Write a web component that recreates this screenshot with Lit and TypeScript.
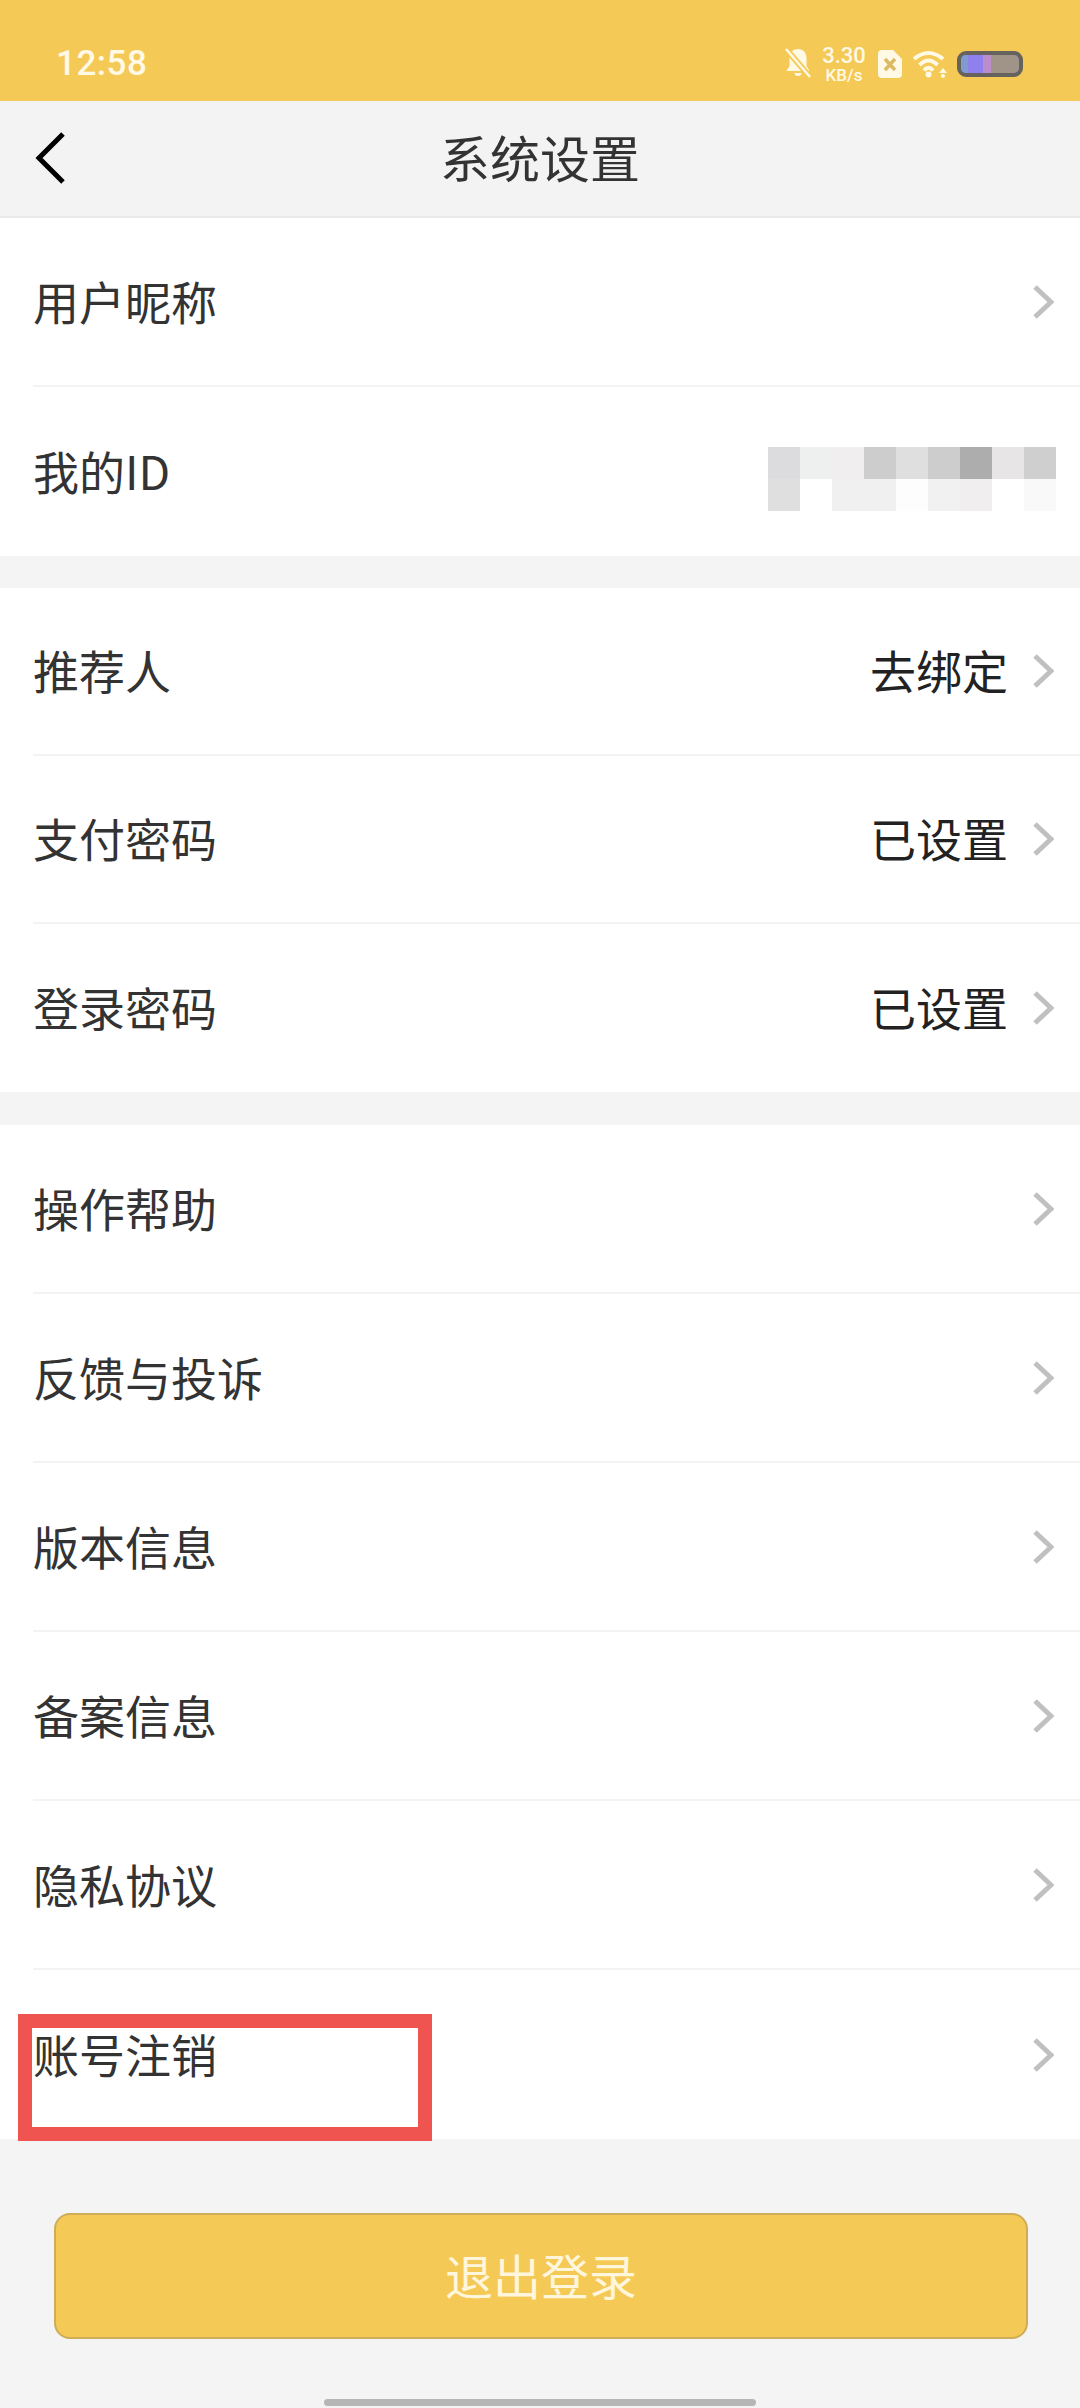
import { LitElement, css, html, svg } from "lit";
import { customElement } from "lit/decorators.js";

// settings screen: rows are grouped in three white sections on a grey page

interface Row {
  label: string;
  value?: string;
  blurred?: boolean;
  noChevron?: boolean;
}

const SECTIONS: { cls: string; rows: Row[] }[] = [
  {
    cls: "first",
    rows: [{ label: "用户昵称" }, { label: "我的ID", blurred: true, noChevron: true }],
  },
  {
    cls: "second",
    rows: [
      { label: "推荐人", value: "去绑定" },
      { label: "支付密码", value: "已设置" },
      { label: "登录密码", value: "已设置" },
    ],
  },
  {
    cls: "third",
    rows: [
      { label: "操作帮助" },
      { label: "反馈与投诉" },
      { label: "版本信息" },
      { label: "备案信息" },
      { label: "隐私协议" },
      { label: "账号注销" },
    ],
  },
];

// mosaic that hides the user id, two rows of nine cells
const MOSAIC = [
  "#dcdbdd", "#eef0ef", "#f1eef0", "#cdcdcd", "#dfdfdf", "#cdcdcd", "#adadad", "#e8e5e7", "#cfcfcf",
  "#dfdfdf", "#ffffff", "#eff0ef", "#eff0ef", "#fefdfd", "#f0f1f0", "#f1eef0", "#ffffff", "#f9f9f9",
];

const chevron = svg`<path d="M3 3 L19 18 L3 33" fill="none" stroke="#c0c0c0" stroke-width="5" />`;

@customElement("app-root")
export class AppRoot extends LitElement {
  static styles = css`
    :host {
      display: block;
      width: 1080px;
      height: 2408px;
      overflow: hidden;
      font-family: "Noto Sans CJK SC", "Noto Sans", sans-serif;
    }
    .page {
      position: relative;
      display: flex;
      flex-direction: column;
      height: 2408px;
      background: #f4f4f5;
    }
    .status {
      display: flex;
      align-items: flex-start;
      justify-content: space-between;
      height: 101px;
      padding: 0 57px 0 56px;
      box-sizing: border-box;
      background: #f5c956;
      color: #fff9e6;
    }
    .time {
      margin-top: 41px;
      font: 500 35px/46px Roboto, sans-serif;
      letter-spacing: 0.5px;
    }
    .icons {
      display: flex;
      align-items: flex-start;
      margin-top: 46px;
    }
    .icons svg {
      display: block;
    }
    .speed {
      display: flex;
      flex-direction: column;
      align-items: center;
      width: 44px;
      margin: 0 12px 0 10px;
      font-family: Roboto, sans-serif;
      font-weight: 500;
    }
    .speed b {
      font-size: 22px;
      font-weight: 500;
      line-height: 20px;
    }
    .speed i {
      font-size: 17px;
      line-height: 18px;
      font-style: normal;
    }
    .wifi {
      margin-left: 10px;
    }
    .battery {
      display: flex;
      width: 66px;
      height: 26px;
      margin: 5px 0 0 10px;
      box-sizing: border-box;
      border: 4px solid #66635f;
      border-radius: 9px;
      overflow: hidden;
      background: #a09488;
    }
    .battery span {
      display: block;
      height: 100%;
    }
    .seg-a {
      width: 7px;
      background: #7f9bd0;
    }
    .seg-b {
      width: 15px;
      background: #8f80ee;
    }
    .seg-c {
      width: 8px;
      background: #bd8ccb;
    }
    .header {
      position: relative;
      display: flex;
      align-items: center;
      justify-content: center;
      height: 117px;
      padding-bottom: 5px;
      box-sizing: border-box;
      border-bottom: 2px solid #e9e9e9;
      background: #f3f3f3;
      color: #333;
      font-size: 50px;
      line-height: 1;
    }
    .back {
      position: absolute;
      left: 34px;
      top: 31px;
    }
    .section {
      background: #fff;
    }
    .second {
      margin-top: 32px;
    }
    .third {
      margin-top: 33px;
    }
    .row {
      display: flex;
      align-items: center;
      justify-content: space-between;
      height: 169px;
      margin-left: 33px;
      padding-right: 26px;
      padding-bottom: 4px;
      box-sizing: border-box;
      border-bottom: 2px solid #f3f3f3;
      color: #333;
      font-size: 46px;
      line-height: 1;
    }
    .second .row {
      height: 168px;
    }
    .row:last-child {
      border-bottom: none;
    }
    .end {
      display: flex;
      align-items: center;
      gap: 24px;
      color: #222;
    }
    .end svg {
      display: block;
      margin-top: 4px;
    }
    .mosaic {
      display: grid;
      grid-template-columns: repeat(9, 32px);
      grid-auto-rows: 32px;
      margin: 18px -2px 0 0;
    }
    .logout {
      display: flex;
      align-items: center;
      justify-content: center;
      height: 126px;
      margin: 74px 52px 0 54px;
      padding-bottom: 5px;
      box-sizing: border-box;
      border: 2px solid #cfad57;
      border-radius: 16px;
      background: #f5c956;
      color: #fff6dc;
      font-size: 48px;
      line-height: 1;
    }
    .home {
      width: 432px;
      height: 7px;
      margin: 60px auto 0 324px;
      border-radius: 4px;
      background: #b6b6b6;
    }
    /* annotation drawn over the last row */
    .mark {
      position: absolute;
      left: 18px;
      top: 2014px;
      width: 414px;
      height: 127px;
      box-sizing: border-box;
      border: 14px solid #f05450;
    }
  `;

  private renderStatusIcons() {
    return html`
      <div class="icons">
        <svg width="28" height="32" viewBox="0 0 28 32">
          <path
            d="M14 3c5.500 0 8.500 4 8.500 9v8l3 5H2.500l3-5v-8c0-5 3-9 8.500-9z M10.500 27h7a3.500 3 0 0 1-7 0z"
            fill="#fff9e6"
          />
          <path d="M2 3 L26 31" stroke="#f5c956" stroke-width="6" />
          <path d="M2 3 L26 31" stroke="#fff9e6" stroke-width="2.500" />
        </svg>
        <div class="speed"><b>3.30</b><i>KB/s</i></div>
        <svg width="24" height="32" viewBox="0 0 24 32">
          <path d="M4 4h11l9 9v15a4 4 0 0 1-4 4H4a4 4 0 0 1-4-4V8a4 4 0 0 1 4-4z" fill="#fff9e6" />
          <path d="M7 13 L17 24 M17 13 L7 24" stroke="#dcb964" stroke-width="3.500" />
        </svg>
        <svg class="wifi" width="35" height="32" viewBox="0 0 35 32">
          <g fill="none" stroke="#fff9e6" stroke-width="4">
            <path d="M2 13 Q16.500 1 31 13" />
            <path d="M7.500 19 Q16.500 10 25.500 19" />
            <path d="M12 24.500 Q16.500 19 21 24.500" />
          </g>
          <circle cx="16.500" cy="28.500" r="3" fill="#fff9e6" />
          <path d="M27 27 L31 22 L35 27 Z" fill="#fff9e6" />
          <circle cx="31" cy="30" r="2" fill="#fff9e6" />
        </svg>
        <div class="battery">
          <span class="seg-a"></span><span class="seg-b"></span><span class="seg-c"></span>
        </div>
      </div>
    `;
  }

  private renderRow(row: Row) {
    return html`
      <div class="row">
        <span>${row.label}</span>
        <div class="end">
          ${row.value ? html`<span>${row.value}</span>` : ""}
          ${row.blurred
            ? html`<div class="mosaic">
                ${MOSAIC.map((c) => html`<span style="background:${c}"></span>`)}
              </div>`
            : ""}
          ${row.noChevron
            ? ""
            : html`<svg width="22" height="36" viewBox="0 0 22 36">${chevron}</svg>`}
        </div>
      </div>
    `;
  }

  protected render() {
    return html`
      <div class="page">
        <div class="status">
          <span class="time">12:58</span>
          ${this.renderStatusIcons()}
        </div>
        <div class="header">
          <svg class="back" width="32" height="52" viewBox="0 0 32 52">
            <path d="M29 2 L5 26 L29 50" fill="none" stroke="#000" stroke-width="5" />
          </svg>
          系统设置
        </div>
        ${SECTIONS.map(
          (s) => html`<div class="section ${s.cls}">${s.rows.map((r) => this.renderRow(r))}</div>`,
        )}
        <div class="logout">退出登录</div>
        <div class="home"></div>
        <div class="mark"></div>
      </div>
    `;
  }
}
